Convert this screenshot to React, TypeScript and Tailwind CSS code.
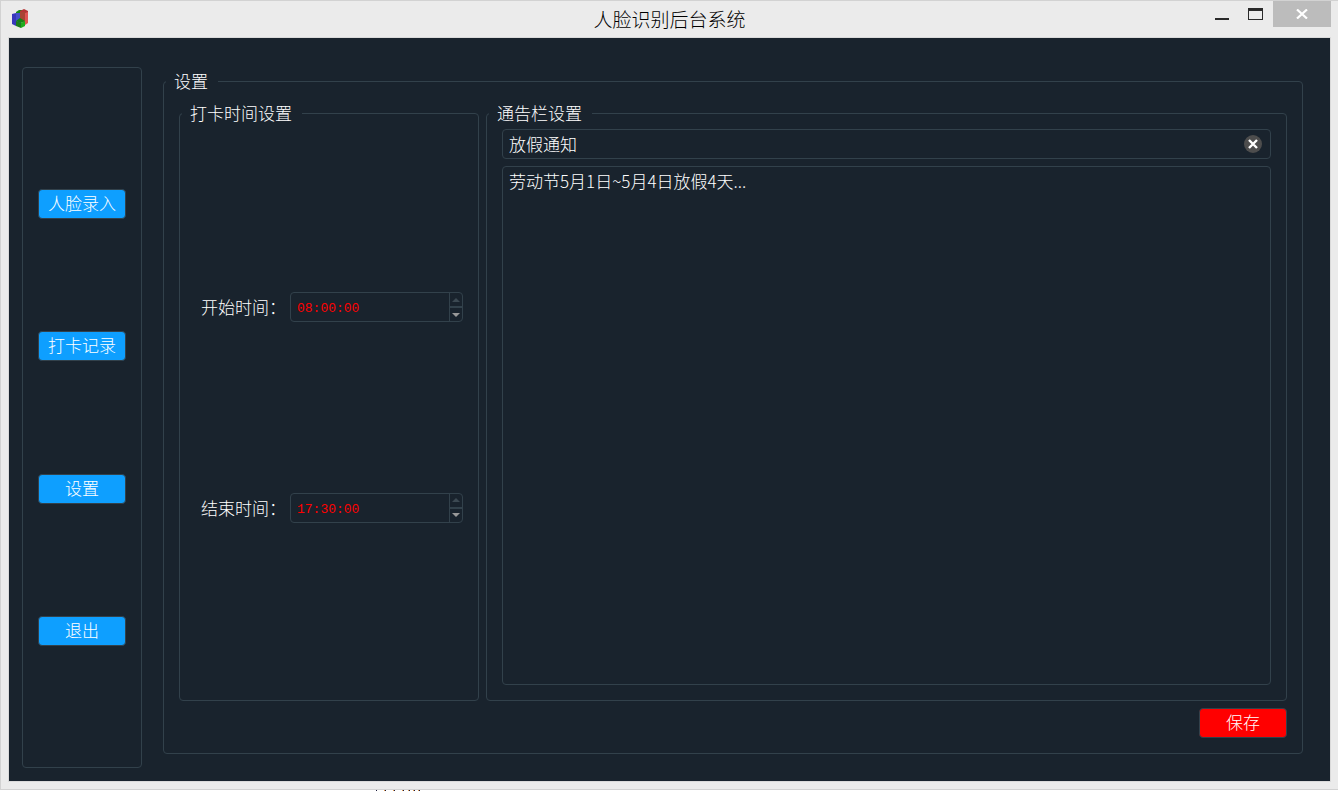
import { useState } from "react";
import type { ReactNode } from "react";

const NAV_ITEMS = ["人脸录入", "打卡记录", "设置", "退出"];

function AppIcon() {
  return (
    <svg className="h-5 w-4" viewBox="0 0 16 20" aria-hidden="true">
      <path d="M4 3l3-2h4v6H4z" fill="#168a16" />
      <path d="M0 5l4-1v13l-4-2z" fill="#3838bc" />
      <path d="M4 4h5v12l-5 1z" fill="#4450c8" />
      <path d="M8 2l4-2 4 2v2H8z" fill="#b43434" />
      <path d="M8 3h5v12l-5-3z" fill="#a84434" />
      <path d="M13 4l3-1v11l-3 2z" fill="#e05454" />
      <path d="M4 12l4-3 5 3-4 2z" fill="#148414" />
      <path d="M4 12l5 2v5l-5-2z" fill="#1c7c1c" />
      <path d="M9 14l4-2v5l-4 2z" fill="#1cac1c" />
    </svg>
  );
}

function TitleBar() {
  return (
    <header className="relative flex h-[37px] shrink-0 items-center justify-center pb-[2px]">
      <div className="absolute left-[11px] top-2">
        <AppIcon />
      </div>
      <h1 className="text-[19px] leading-6 text-black">人脸识别后台系统</h1>
      <div className="absolute right-[7px] top-0 flex">
        <button aria-label="最小化" className="flex h-[26px] w-8 items-center justify-center">
          <svg className="h-4 w-4" viewBox="0 0 16 16">
            <path d="M2 12h14v2H2z" fill="#2a2a2a" />
          </svg>
        </button>
        <button aria-label="最大化" className="flex h-[26px] w-9 items-center justify-center">
          <svg className="h-4 w-4" viewBox="0 0 16 16">
            <path d="M1 2h15v12H1zM2 5v8h13V5z" fill="#2a2a2a" fillRule="evenodd" />
          </svg>
        </button>
        <button aria-label="关闭" className="flex h-[26px] w-[58px] items-center justify-center bg-[#bcbcbc]">
          <svg className="h-[10px] w-3" viewBox="0 0 12 10" stroke="#fff" strokeWidth={2.2}>
            <path d="M1 .5l10 9M11 .5l-10 9" />
          </svg>
        </button>
      </div>
    </header>
  );
}

function Group({ title, className, children }: { title: string; className: string; children: ReactNode }) {
  return (
    <fieldset className={`flex min-w-0 flex-col rounded border border-[#32414b] ${className}`}>
      <legend className="ml-[2px] pb-[2px] pl-2 pr-[10px] leading-[15px]">{title}</legend>
      {children}
    </fieldset>
  );
}

function TimeField({ id, label, initial }: { id: string; label: string; initial: string }) {
  const [value, setValue] = useState(initial);

  return (
    <div className="flex items-center justify-between pl-[21px]">
      <label htmlFor={id} className="whitespace-nowrap">
        {label}
      </label>
      <div className="flex h-[30px] w-[173px] overflow-hidden rounded border border-[#32414b]">
        <input
          id={id}
          value={value}
          onChange={(e) => setValue(e.target.value)}
          className="min-w-0 flex-1 bg-transparent px-[6px] pt-1 font-['Liberation_Mono',monospace] text-[13px] text-[#ff0000] outline-none"
        />
        <div className="flex w-[13px] flex-col border-l border-[#32414b]">
          <button aria-label="增加" className="flex flex-1 items-center justify-center border-b border-[#32414b]">
            <svg className="h-1 w-2" viewBox="0 0 8 4">
              <path d="M0 4l4-4 4 4z" fill="#3c4952" />
            </svg>
          </button>
          <button aria-label="减少" className="flex flex-1 items-center justify-center border-t border-[#32414b]">
            <svg className="h-1 w-2" viewBox="0 0 8 4">
              <path d="M0 0h8L4 4z" fill="#999999" />
            </svg>
          </button>
        </div>
      </div>
    </div>
  );
}

export default function App() {
  const [subject, setSubject] = useState("放假通知");
  const [body, setBody] = useState("劳动节5月1日~5月4日放假4天...");

  return (
    <div className="flex h-screen flex-col bg-white font-['Noto_Sans_CJK_SC',sans-serif] font-light">
      <div className="flex min-h-0 flex-1 flex-col border-y border-l border-[#d2d2d2] bg-[#ebebeb]">
        <TitleBar />
        <main className="mb-2 ml-2 mr-2 flex min-h-0 flex-1 bg-[#19232d] pl-[13px] text-[17px] leading-6 text-white outline outline-[#dadada]">
          <nav className="mb-[13px] mt-[29px] flex w-[120px] shrink-0 flex-col items-center justify-evenly rounded border border-[#32414b] py-[9px]">
            {NAV_ITEMS.map((item) => (
              <button
                key={item}
                className="h-[30px] w-[88px] rounded border border-[#32414b] bg-[#0e9fff] pb-[2px]"
              >
                {item}
              </button>
            ))}
          </nav>

          <div className="flex min-w-0 flex-1 pb-[27px] pl-[21px] pr-[27px] pt-[35px]">
            <Group title="设置" className="flex-1">
              <div className="flex min-h-0 flex-1 gap-[7px] px-[15px] pt-[15px]">
                <Group title="打卡时间设置" className="w-[300px] shrink-0">
                  <div className="flex flex-1 flex-col justify-evenly pb-[7px] pr-[15px]">
                    <TimeField id="start-time" label="开始时间：" initial="08:00:00" />
                    <TimeField id="end-time" label="结束时间：" initial="17:30:00" />
                  </div>
                </Group>

                <Group title="通告栏设置" className="flex-1">
                  <div className="flex min-h-0 flex-1 flex-col gap-[7px] px-[15px] pb-[15px] pt-[7px]">
                    <div className="flex h-[30px] shrink-0 items-center rounded border border-[#32414b] pl-[6px] pr-2">
                      <input
                        aria-label="通告标题"
                        value={subject}
                        onChange={(e) => setSubject(e.target.value)}
                        className="min-w-0 flex-1 bg-transparent outline-none"
                      />
                      <button aria-label="清除" onClick={() => setSubject("")}>
                        <svg className="h-[18px] w-[18px]" viewBox="0 0 18 18">
                          <circle cx="9" cy="9" r="9" fill="#4d4d4d" />
                          <path d="M5 5l8 8M13 5l-8 8" stroke="#fff" strokeWidth={2.4} />
                        </svg>
                      </button>
                    </div>
                    <textarea
                      aria-label="通告内容"
                      value={body}
                      onChange={(e) => setBody(e.target.value)}
                      className="min-h-0 flex-1 resize-none rounded border border-[#32414b] bg-transparent px-[6px] py-[2px] outline-none"
                    />
                  </div>
                </Group>
              </div>
              <button className="mb-[15px] mr-[15px] mt-[7px] h-[30px] w-[88px] self-end rounded border border-[#32414b] bg-[#ff0000] pb-[2px]">
                保存
              </button>
            </Group>
          </div>
        </main>
      </div>
      {/* sliver of the window behind */}
      <svg className="ml-[374px] h-px w-12 shrink-0" viewBox="0 0 48 1" aria-hidden="true">
        <path d="M2 .5h1M11 .5h1M20 .5h1M29 .5h1M35 .5h1M40 .5h1M45 .5h1" stroke="#1c1c3c" />
        <path d="M10 .5h1M19 .5h1M28 .5h1M34 .5h1M39 .5h1M44 .5h1" stroke="#e89c4c" />
      </svg>
    </div>
  );
}
